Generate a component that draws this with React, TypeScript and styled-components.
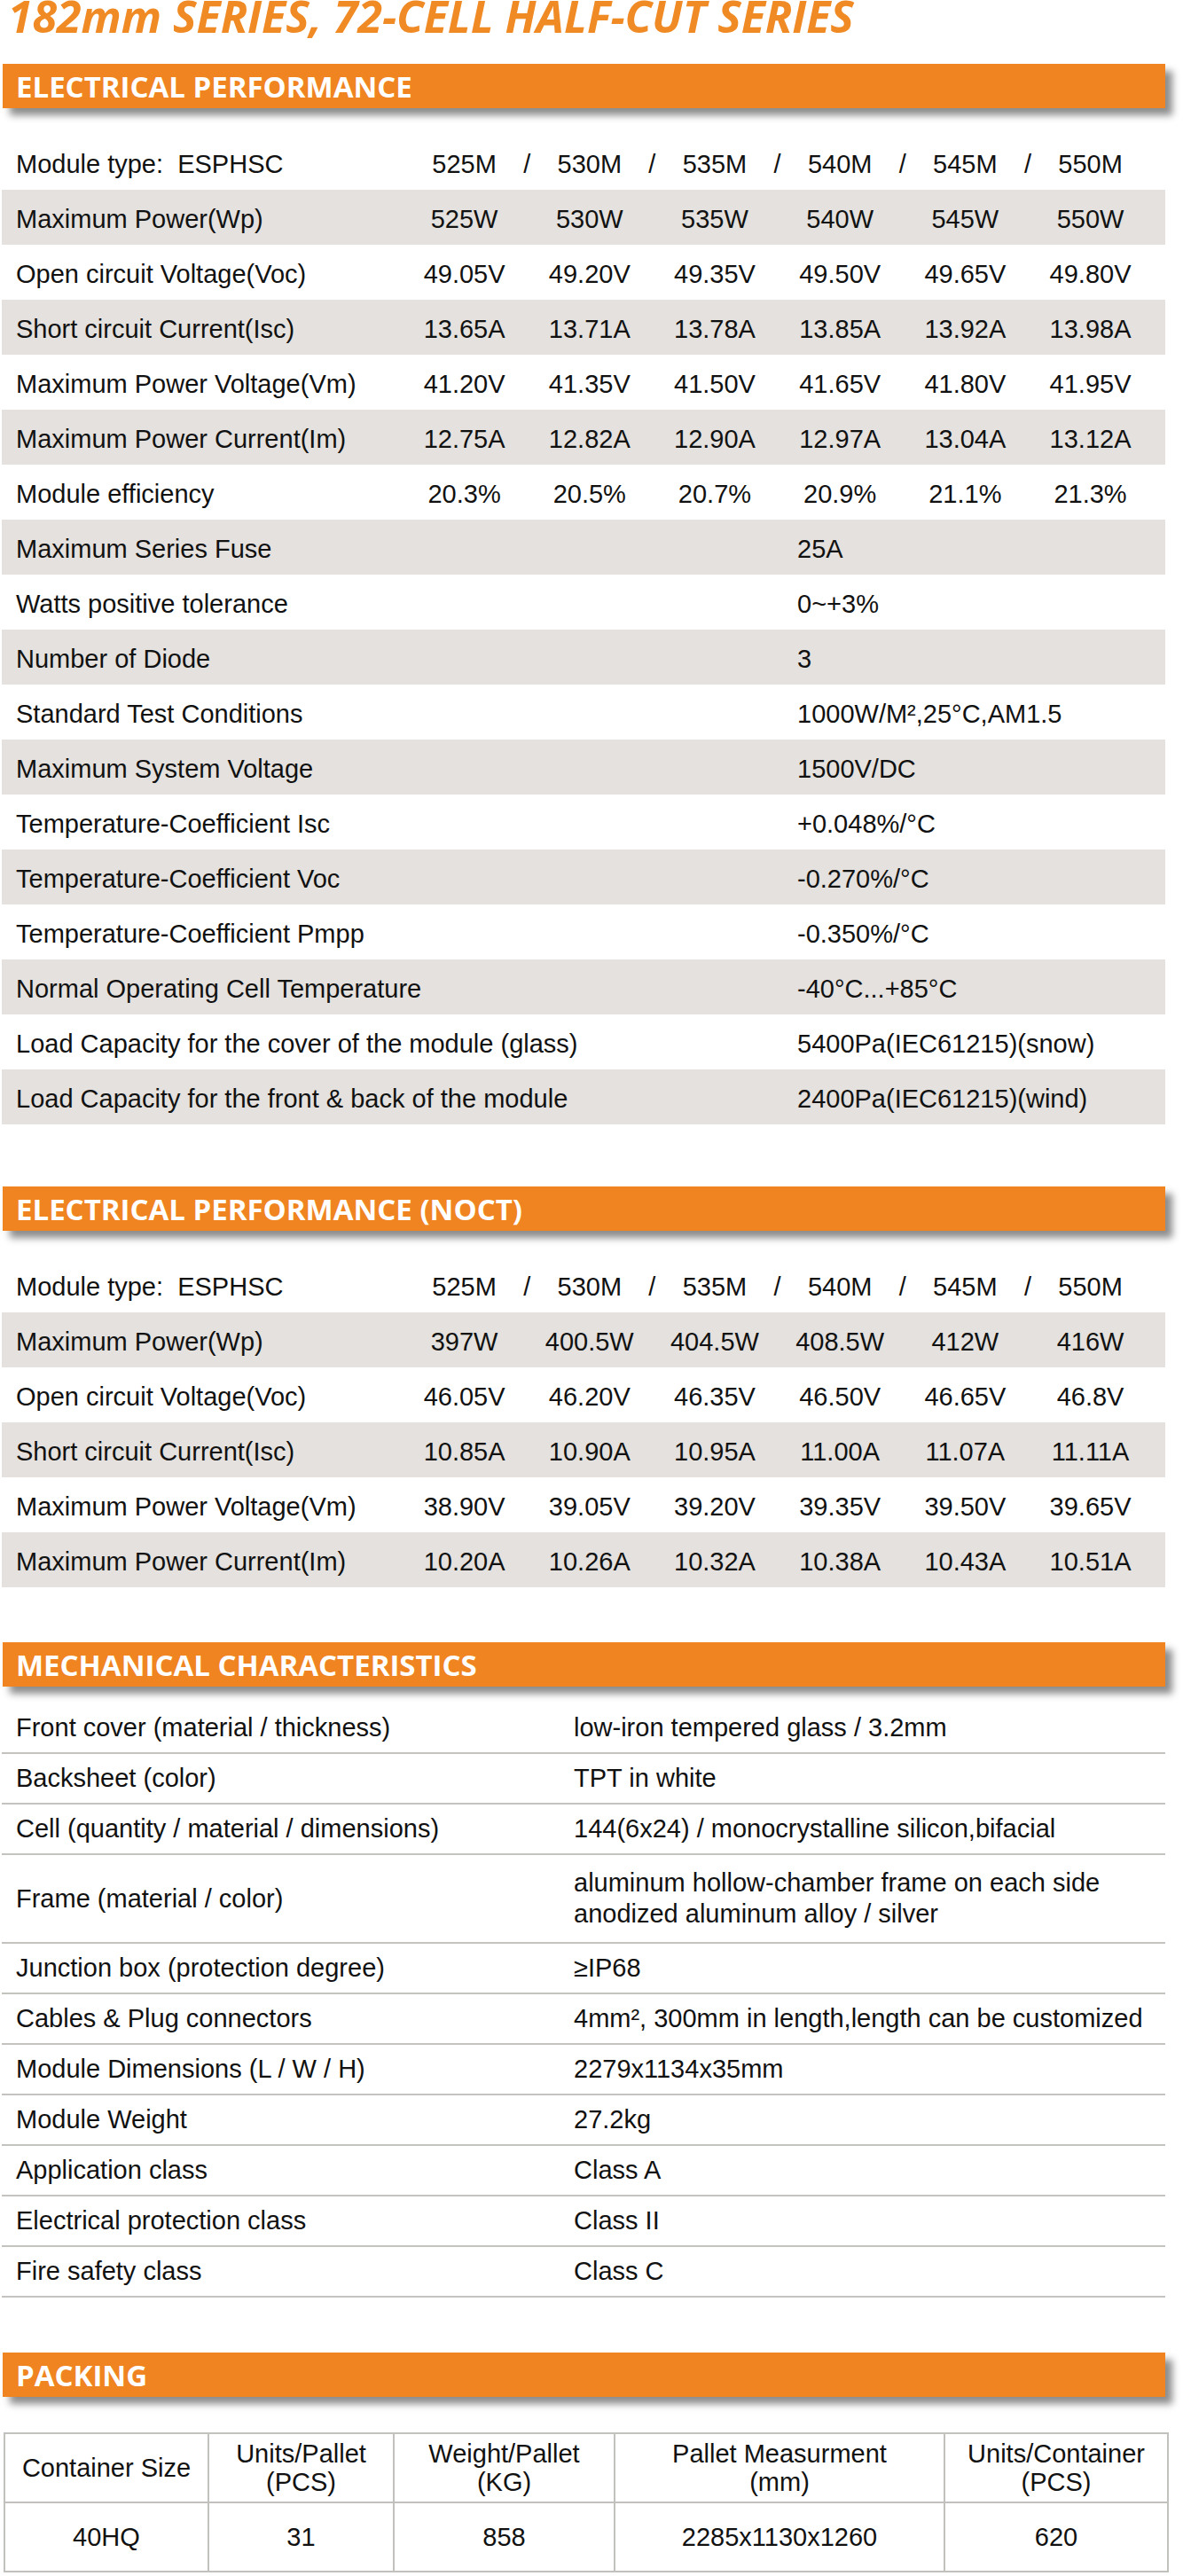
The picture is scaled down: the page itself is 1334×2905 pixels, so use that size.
import React from "react";
import styled, { createGlobalStyle } from "styled-components";

const GlobalStyle = createGlobalStyle`
  html, body { margin: 0; padding: 0; background: #ffffff; }
  body { font-family: "Liberation Sans", Arial, sans-serif; color: #111111; }
`;

const Page = styled.main`
  width: 1312px;
  padding: 0 20px 2px 2px;
  display: flex;
  flex-direction: column;
`;

const Title = styled.h1`
  margin: 0 0 35px 7px;
  font-family: "Open Sans", sans-serif;
  font-weight: 700;
  font-style: italic;
  font-size: 50px;
  line-height: 37px;
  letter-spacing: 0;
  color: #f08a24;
  white-space: nowrap;
`;

const Section = styled.section<{ $gap: number }>`
  display: flex;
  flex-direction: column;
  margin-bottom: ${(p) => p.$gap}px;
`;

const Bar = styled.h2<{ $after: number }>`
  margin: 0 0 ${(p) => p.$after}px 1px;
  height: 50px;
  box-sizing: border-box;
  padding: 1px 0 0 15px;
  background: #ef8421;
  box-shadow: 8px 8px 8px rgba(0, 0, 0, 0.45);
  font-family: "Open Sans", sans-serif;
  font-weight: 700;
  font-size: 33px;
  line-height: 50px;
  color: #ffffff;
  white-space: nowrap;
`;

const SpecRow = styled.div<{ $shaded: boolean }>`
  display: flex;
  align-items: center;
  height: 62px;
  box-sizing: border-box;
  padding-top: 4px;
  background: ${(p) => (p.$shaded ? "#e4e1de" : "transparent")};
  font-size: 29px;
  white-space: pre;
`;

const Label = styled.div<{ $width: number }>`
  flex: 0 0 ${(p) => p.$width}px;
  box-sizing: border-box;
  padding-left: 16px;
`;

const Value = styled.div`
  flex: 0 0 141.2px;
  text-align: center;
`;

const Slash = styled.span`
  flex: 0 0 0;
  width: 0;
  display: flex;
  justify-content: center;
`;

const MechRow = styled.div<{ $tall?: boolean }>`
  display: flex;
  align-items: center;
  min-height: ${(p) => (p.$tall ? 98 : 55)}px;
  border-bottom: 2px solid #c4c3c0;
  font-size: 29px;
`;

const MechLabel = styled.div`
  flex: 0 0 645px;
  box-sizing: border-box;
  padding-left: 16px;
`;

const MechValue = styled.div`
  line-height: 35px;
`;

const PackTable = styled.table`
  margin: 0 0 0 2px;
  width: 1312px;
  border-collapse: collapse;
  table-layout: fixed;
  font-size: 29px;
`;

const Col = styled.col<{ $w: number }>`
  width: ${(p) => p.$w}px;
`;

const Cell = styled.td`
  border: 2px solid #c2c1bd;
  height: 76px;
  padding: 0;
  text-align: center;
  vertical-align: middle;
  line-height: 32px;
  font-weight: 400;
`;

const HeadCell = styled(Cell).attrs({ as: "th" })``;

type MultiRow = { label: string; values: string[] };
type SingleRow = { label: string; value: string };

const models = ["525M", "530M", "535M", "540M", "545M", "550M"];

const stcMulti: MultiRow[] = [
  { label: "Maximum Power(Wp)", values: ["525W", "530W", "535W", "540W", "545W", "550W"] },
  { label: "Open circuit Voltage(Voc)", values: ["49.05V", "49.20V", "49.35V", "49.50V", "49.65V", "49.80V"] },
  { label: "Short circuit Current(Isc)", values: ["13.65A", "13.71A", "13.78A", "13.85A", "13.92A", "13.98A"] },
  { label: "Maximum Power Voltage(Vm)", values: ["41.20V", "41.35V", "41.50V", "41.65V", "41.80V", "41.95V"] },
  { label: "Maximum Power Current(Im)", values: ["12.75A", "12.82A", "12.90A", "12.97A", "13.04A", "13.12A"] },
  { label: "Module efficiency", values: ["20.3%", "20.5%", "20.7%", "20.9%", "21.1%", "21.3%"] },
];

const stcSingle: SingleRow[] = [
  { label: "Maximum Series Fuse", value: "25A" },
  { label: "Watts positive tolerance", value: "0~+3%" },
  { label: "Number of Diode", value: "3" },
  { label: "Standard Test Conditions", value: "1000W/M²,25°C,AM1.5" },
  { label: "Maximum System Voltage", value: "1500V/DC" },
  { label: "Temperature-Coefficient Isc", value: "+0.048%/°C" },
  { label: "Temperature-Coefficient Voc", value: "-0.270%/°C" },
  { label: "Temperature-Coefficient Pmpp", value: "-0.350%/°C" },
  { label: "Normal Operating Cell Temperature", value: "-40°C...+85°C" },
  { label: "Load Capacity for the cover of the module (glass)", value: "5400Pa(IEC61215)(snow)" },
  { label: "Load Capacity for the front & back of the module", value: "2400Pa(IEC61215)(wind)" },
];

const noctMulti: MultiRow[] = [
  { label: "Maximum Power(Wp)", values: ["397W", "400.5W", "404.5W", "408.5W", "412W", "416W"] },
  { label: "Open circuit Voltage(Voc)", values: ["46.05V", "46.20V", "46.35V", "46.50V", "46.65V", "46.8V"] },
  { label: "Short circuit Current(Isc)", values: ["10.85A", "10.90A", "10.95A", "11.00A", "11.07A", "11.11A"] },
  { label: "Maximum Power Voltage(Vm)", values: ["38.90V", "39.05V", "39.20V", "39.35V", "39.50V", "39.65V"] },
  { label: "Maximum Power Current(Im)", values: ["10.20A", "10.26A", "10.32A", "10.38A", "10.43A", "10.51A"] },
];

const mech: { label: string; value: string[] }[] = [
  { label: "Front cover (material / thickness)", value: ["low-iron tempered glass / 3.2mm"] },
  { label: "Backsheet (color)", value: ["TPT in white"] },
  { label: "Cell (quantity / material / dimensions)", value: ["144(6x24) / monocrystalline silicon,bifacial"] },
  { label: "Frame (material / color)", value: ["aluminum hollow-chamber frame on each side", "anodized aluminum alloy / silver"] },
  { label: "Junction box (protection degree)", value: ["≥IP68"] },
  { label: "Cables & Plug connectors", value: ["4mm², 300mm in length,length can be customized"] },
  { label: "Module Dimensions (L / W / H)", value: ["2279x1134x35mm"] },
  { label: "Module Weight", value: ["27.2kg"] },
  { label: "Application class", value: ["Class A"] },
  { label: "Electrical protection class", value: ["Class II"] },
  { label: "Fire safety class", value: ["Class C"] },
];

const packHead = [
  ["Container Size"],
  ["Units/Pallet", "(PCS)"],
  ["Weight/Pallet", "(KG)"],
  ["Pallet Measurment", "(mm)"],
  ["Units/Container", "(PCS)"],
];
const packData = ["40HQ", "31", "858", "2285x1130x1260", "620"];
const packWidths = [230, 209, 249, 372, 252];

function ModelRow() {
  return (
    <SpecRow $shaded={false}>
      <Label $width={451}>{"Module type:  ESPHSC"}</Label>
      {models.map((m, i) => (
        <React.Fragment key={m}>
          {i > 0 && <Slash>/</Slash>}
          <Value>{m}</Value>
        </React.Fragment>
      ))}
    </SpecRow>
  );
}

function MultiRows({ rows, offset }: { rows: MultiRow[]; offset: number }) {
  return (
    <>
      {rows.map((r, i) => (
        <SpecRow key={r.label} $shaded={(i + offset) % 2 === 0}>
          <Label $width={451}>{r.label}</Label>
          {r.values.map((v, j) => (
            <Value key={j}>{v}</Value>
          ))}
        </SpecRow>
      ))}
    </>
  );
}

export default function App() {
  return (
    <>
      <GlobalStyle />
      <Page>
        <Title>182mm SERIES, 72-CELL HALF-CUT SERIES</Title>

        <Section $gap={70}>
          <Bar $after={30}>ELECTRICAL PERFORMANCE</Bar>
          <ModelRow />
          <MultiRows rows={stcMulti} offset={0} />
          {stcSingle.map((r, i) => (
            <SpecRow key={r.label} $shaded={i % 2 === 0}>
              <Label $width={897}>{r.label}</Label>
              <div>{r.value}</div>
            </SpecRow>
          ))}
        </Section>

        <Section $gap={62}>
          <Bar $after={30}>ELECTRICAL PERFORMANCE (NOCT)</Bar>
          <ModelRow />
          <MultiRows rows={noctMulti} offset={0} />
        </Section>

        <Section $gap={62}>
          <Bar $after={19}>MECHANICAL CHARACTERISTICS</Bar>
          {mech.map((r) => (
            <MechRow key={r.label} $tall={r.value.length > 1}>
              <MechLabel>{r.label}</MechLabel>
              <MechValue>
                {r.value.map((line) => (
                  <div key={line}>{line}</div>
                ))}
              </MechValue>
            </MechRow>
          ))}
        </Section>

        <Section $gap={0}>
          <Bar $after={40}>PACKING</Bar>
          <PackTable>
            <colgroup>
              {packWidths.map((w, i) => (
                <Col key={i} $w={w} />
              ))}
            </colgroup>
            <thead>
              <tr>
                {packHead.map((lines, i) => (
                  <HeadCell key={i}>
                    {lines.map((l) => (
                      <div key={l}>{l}</div>
                    ))}
                  </HeadCell>
                ))}
              </tr>
            </thead>
            <tbody>
              <tr>
                {packData.map((d, i) => (
                  <Cell key={i}>{d}</Cell>
                ))}
              </tr>
            </tbody>
          </PackTable>
        </Section>
      </Page>
    </>
  );
}
